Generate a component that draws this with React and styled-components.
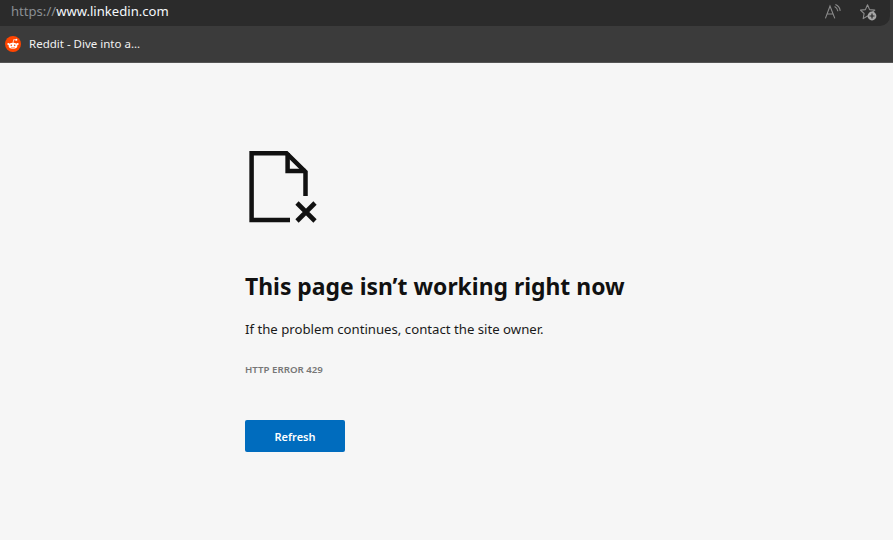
import React from "react";
import styled, { createGlobalStyle } from "styled-components";

const Global = createGlobalStyle`
  html, body { margin: 0; padding: 0; background: #f6f6f6; }
  body { font-family: "Noto Sans", "Open Sans", "Liberation Sans", sans-serif; }
  #root { width: 893px; height: 540px; overflow: hidden; }
`;

const Chrome = styled.header`
  background: #3b3b3b;
  border-bottom: 1px solid #555;
  height: 63px;
  box-sizing: border-box;
  display: flex;
  flex-direction: column;
`;
const AddressBar = styled.div`
  height: 26px;
  flex: none;
  margin-right: 3px;
  background: #2b2b2b;
  border-bottom-right-radius: 10px;
  display: flex;
  align-items: center;
  justify-content: space-between;
  padding: 0 10px 0 11px;
  box-sizing: border-box;
`;
const Url = styled.div`
  font-size: 13.1px;
  line-height: 22px;
  margin-top: -4px;
  color: #f4f8fb;
`;
const Scheme = styled.span`
  color: #8a8f93;
`;
const Actions = styled.div`
  display: flex;
  align-items: center;
  gap: 17px;
  margin-top: -2px;
`;
const Favorites = styled.div`
  display: flex;
  align-items: center;
  height: 36px;
  padding-left: 5px;
  gap: 8px;
`;
const Label = styled.span`
  font-size: 11.5px;
  color: #f2f2f2;
  margin-top: -1px;
`;
const Page = styled.main`
  background: #f6f6f6;
  padding: 87px 0 0 245px;
  height: 477px;
  box-sizing: border-box;
`;
const IconWrap = styled.div`
  height: 76px;
  margin-left: 3px;
`;
const Title = styled.h1`
  margin: 44px 0 0;
  font-size: 22.9px;
  line-height: 34px;
  font-weight: 700;
  color: #111;
  white-space: nowrap;
`;
const Message = styled.p`
  margin: 15px 0 0;
  font-size: 13.2px;
  line-height: 20px;
  color: #1a1a1a;
`;
const Code = styled.div`
  margin-top: 24px;
  font-size: 9.7px;
  line-height: 14px;
  font-weight: 600;
  color: #767676;
`;
const Refresh = styled.button`
  display: block;
  margin-top: 43px;
  width: 100px;
  height: 32px;
  border: 0;
  border-radius: 2px;
  background: #006cbe;
  color: #fff;
  font-family: inherit;
  font-size: 11px;
  font-weight: 600;
  padding: 0;
`;

const ReadAloud = () => (
  <svg width="18" height="18" viewBox="0 0 18 18" fill="none" stroke="#8c8c8c" strokeWidth="1.1">
    <path d="M0.4 15.4 L5 3 L9.8 15.4 M2 11 H8.2" />
    <path d="M9.6 3.4 C11.4 4.4 12.6 6 12.9 8.2 M10.4 1.6 C13 2.6 14.8 5 15.2 7.8" />
  </svg>
);
const StarAdd = () => (
  <svg width="20" height="20" viewBox="0 0 20 20" fill="none">
    <path d="M7.5 2.8 L9.6 7.6 L14.8 8.1 L10.9 11.5 L11.9 16.5 L7.5 14 L3.2 16.6 L4.1 11.5 L0.4 8.1 L5.4 7.6 Z" stroke="#8c8c8c" strokeWidth="1.1" strokeLinejoin="round" />
    <circle cx="12" cy="14" r="4.4" fill="#a6a6a6" />
    <path d="M12 11.5 V16.5 M9.5 14 H14.5" stroke="#2b2b2b" strokeWidth="1.2" />
  </svg>
);
const RedditLogo = () => (
  <svg width="16" height="16" viewBox="0 0 16 16">
    <circle cx="8" cy="8" r="8" fill="#ff4500" />
    <ellipse cx="8" cy="9.8" rx="4.4" ry="3" fill="#fff" />
    <circle cx="3.4" cy="8" r="1.1" fill="#fff" />
    <circle cx="12.6" cy="8" r="1.1" fill="#fff" />
    <circle cx="11.4" cy="3.8" r="1" fill="#fff" />
    <path d="M8 7 L8.7 3.6 L11.2 4" stroke="#fff" strokeWidth="0.7" fill="none" />
    <circle cx="6.3" cy="9.2" r="0.8" fill="#ff4500" />
    <circle cx="9.7" cy="9.2" r="0.8" fill="#ff4500" />
    <path d="M6.2 11.2 C7.2 12 8.8 12 9.8 11.2" stroke="#ff4500" strokeWidth="0.6" fill="none" />
  </svg>
);
const BrokenFile = () => (
  <svg width="70" height="74" viewBox="0 0 70 74" fill="none" stroke="#111" strokeWidth="4.5">
    <path d="M42 70 H3.6 V3.2 H38.5 L57.5 22 V46" />
    <path d="M39.6 3 V21 H57.5" />
    <path d="M49 53 L67 71 M67 53 L49 71" strokeWidth="4.6" />
  </svg>
);

export default function App() {
  return (
    <>
      <Global />
      <Chrome>
        <AddressBar>
          <Url>
            <Scheme>https://</Scheme>www.linkedin.com
          </Url>
          <Actions>
            <ReadAloud />
            <StarAdd />
          </Actions>
        </AddressBar>
        <Favorites>
          <RedditLogo />
          <Label>Reddit - Dive into a...</Label>
        </Favorites>
      </Chrome>
      <Page>
        <IconWrap>
          <BrokenFile />
        </IconWrap>
        <Title>This page isn’t working right now</Title>
        <Message>If the problem continues, contact the site owner.</Message>
        <Code>HTTP ERROR 429</Code>
        <Refresh>Refresh</Refresh>
      </Page>
    </>
  );
}
